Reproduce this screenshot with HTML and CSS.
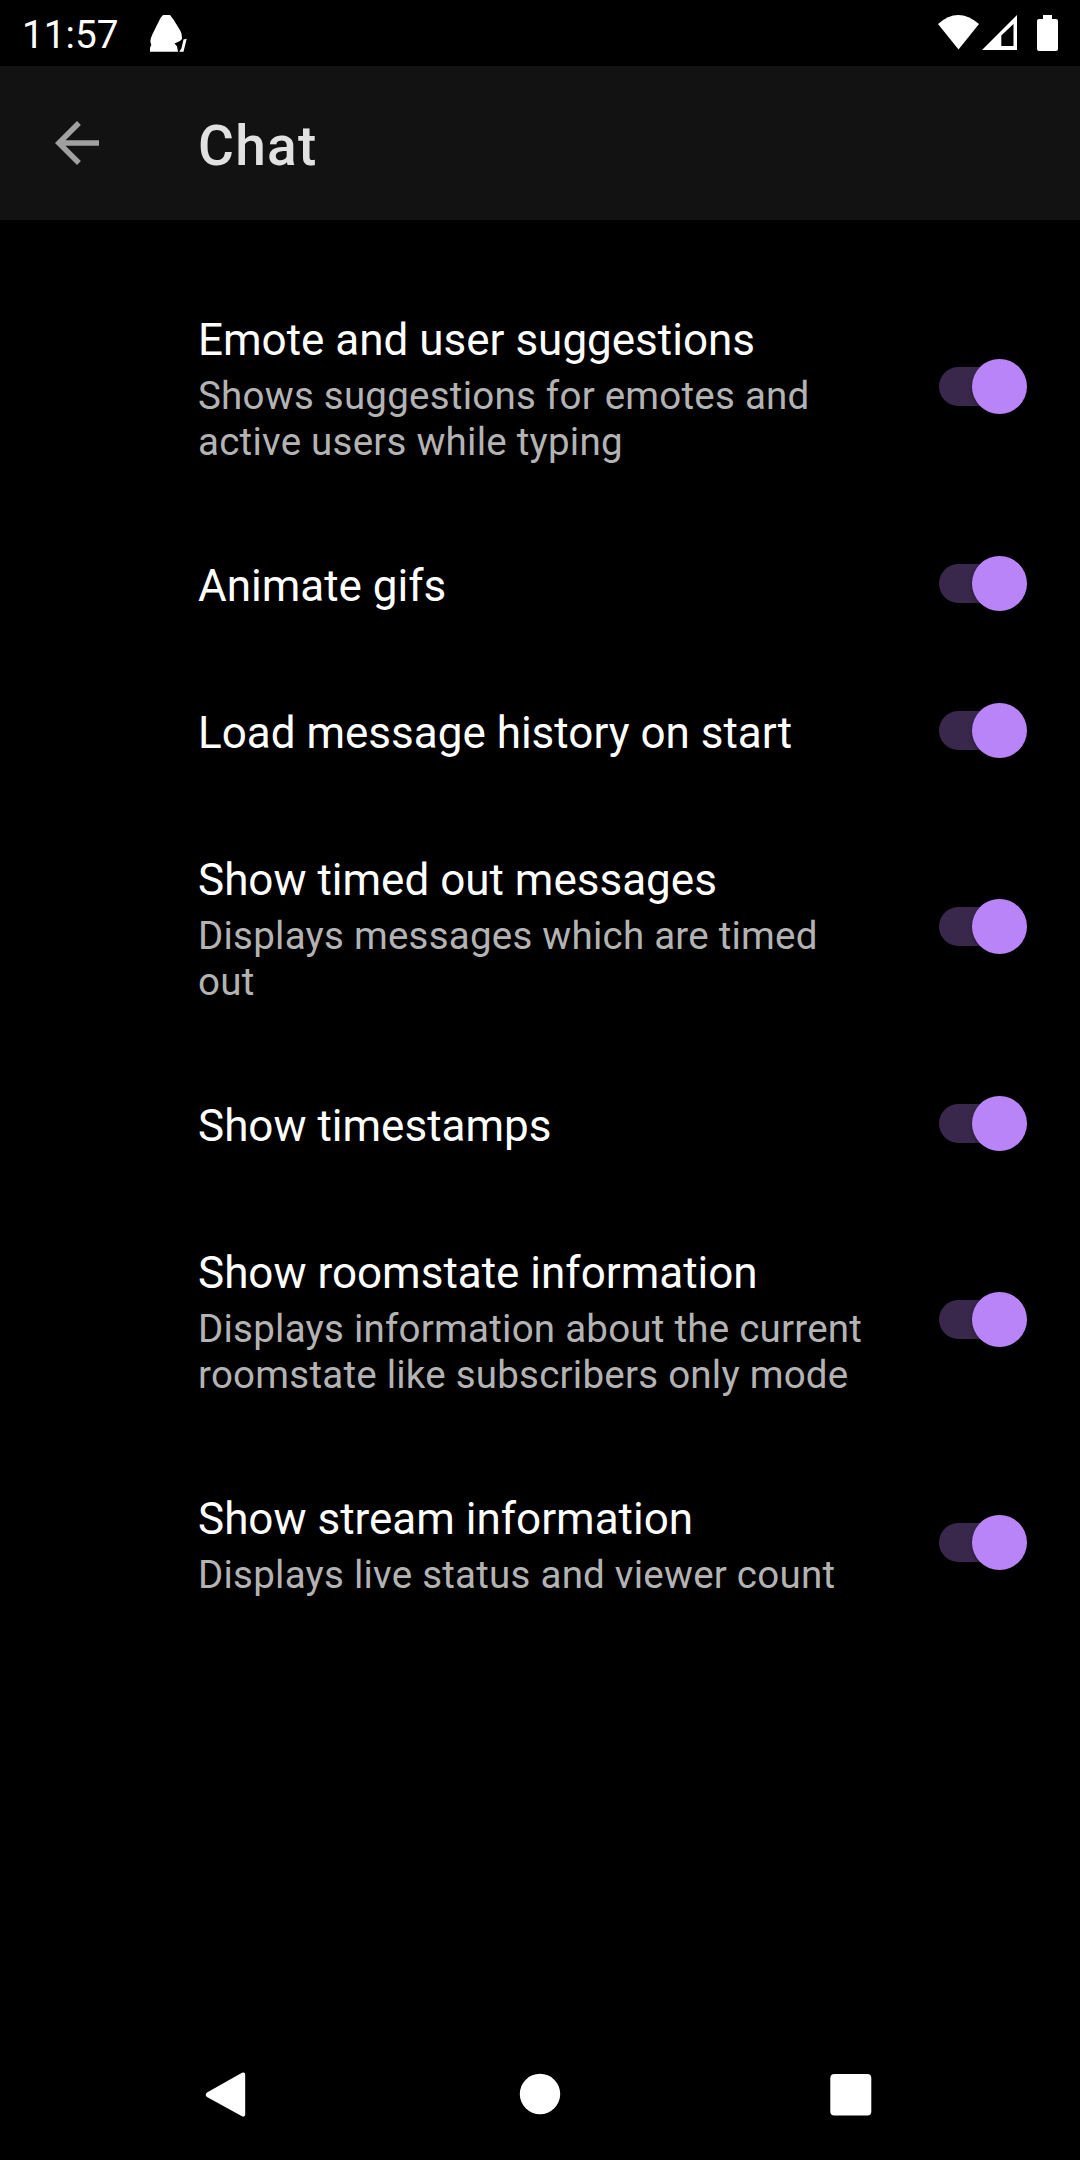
FILE: index.html
```html
<!DOCTYPE html>
<html lang="en">
<head>
<meta charset="utf-8">
<title>Chat</title>
<link rel="stylesheet" href="styles.css">
</head>
<body>
<div class="screen">
  <div class="status-bar">
    <span class="clock">11:57</span>
    <svg class="notification" width="40" height="40" viewBox="0 0 40 40"><path d="M14 2h7l3.800 5 6.400 10.500q1.800 3 1.600 5.500l.2 3-2 2-5.500 2.500 2.500 2.800 1 5.400H1v-4l1.300-2.700-1-3.500q.4-4 2-7l4.200-8.500L11.500 5z M34.500 26.500l3.200-.8-3.200 13h-4.300l2.300-3.500z"/></svg>
    <svg class="signals" width="120" height="40" viewBox="0 0 120 40"><path d="M0 11Q20-7 41 11L20.500 36.500z"/><path fill-rule="evenodd" d="M44 37L79 2v35zM63.300 22.500V33H75.500V11z"/><path d="M105 2h9v4h4q2 0 2 2v28q0 2-2 2h-17q-2 0-2-2V8q0-2 2-2h4z"/></svg>
  </div>
  <header class="app-bar">
    <svg class="back" width="66" height="66" viewBox="0 0 24 24"><path d="M20 11H7.830l5.590-5.590L12 4l-8 8 8 8 1.410-1.410L7.830 13H20z"/></svg>
    <h1 class="heading">Chat</h1>
  </header>
  <main class="settings">
    <div class="row"><div class="text"><div class="title">Emote and user suggestions</div><div class="summary">Shows suggestions for emotes and active users while typing</div></div><div class="switch"><div class="thumb"></div></div></div>
    <div class="row"><div class="text"><div class="title">Animate gifs</div></div><div class="switch"><div class="thumb"></div></div></div>
    <div class="row"><div class="text"><div class="title">Load message history on start</div></div><div class="switch"><div class="thumb"></div></div></div>
    <div class="row"><div class="text"><div class="title">Show timed out messages</div><div class="summary">Displays messages which are timed out</div></div><div class="switch"><div class="thumb"></div></div></div>
    <div class="row"><div class="text"><div class="title">Show timestamps</div></div><div class="switch"><div class="thumb"></div></div></div>
    <div class="row"><div class="text"><div class="title">Show roomstate information</div><div class="summary">Displays information about the current roomstate like subscribers only mode</div></div><div class="switch"><div class="thumb"></div></div></div>
    <div class="row"><div class="text"><div class="title">Show stream information</div><div class="summary">Displays live status and viewer count</div></div><div class="switch"><div class="thumb"></div></div></div>
  </main>
  <nav class="nav-bar">
    <svg width="48" height="48" viewBox="0 0 48 48"><path d="M5 22.500L40 2.800Q43 1.500 43.200 4.500v40q-.2 3-3.200 1.800L5 27q-2.500-2 0-4.500z"/></svg>
    <svg width="48" height="48" viewBox="0 0 48 48"><circle cx="24" cy="24" r="20.200"/></svg>
    <svg width="48" height="48" viewBox="0 0 48 48"><rect x=".3" y="4" width="41" height="41.500" rx="4"/></svg>
  </nav>
</div>
</body>
</html>
```
FILE: styles.css
```css
body { margin: 0; background: #000; font-family: Roboto, sans-serif; }
svg { display: block; fill: #fff; }
.screen { width: 1080px; height: 2160px; display: flex; flex-direction: column; overflow: hidden; }
.status-bar { height: 66px; box-sizing: border-box; padding: 0 22px; display: flex; align-items: flex-start; color: #fff; }
.clock { width: 127px; font-size: 38.8px; line-height: 70px; white-space: nowrap; }
.notification { margin-top: 13px; }
.signals { margin: 13px 0 0 auto; }
.app-bar { height: 154px; background: #121212; display: flex; align-items: center; padding-left: 44px; }
.back { fill: #a0a0a0; }
.heading { margin: 0 0 0 88px; padding-top: 6px; font-size: 55px; font-weight: 500; line-height: 64px; letter-spacing: 1.3px; color: #e1e1e1; }
.settings { flex: 1; padding-top: 44px; }
.row { display: flex; align-items: center; justify-content: space-between; padding: 44px 53px 44px 198px; }
.text { width: 676px; }
.title { padding: 6px 0 1px; font-size: 44px; line-height: 52px; color: #fff; white-space: nowrap; }
.summary { padding: 6px 0 1px; font-size: 38.5px; line-height: 46px; letter-spacing: 0.235px; color: #b3b3b3; }
.switch { position: relative; width: 88px; height: 55px; margin-bottom: 1px; display: flex; align-items: center; justify-content: flex-end; }
.switch::before { content: ""; position: absolute; left: 0; top: 8px; width: 72px; height: 39px; border-radius: 20px; background: #3a284c; }
.thumb { position: relative; width: 55px; height: 55px; border-radius: 50%; background: #b984f8; box-shadow: 0 2px 4px rgba(0, 0, 0, 0.35); }
.nav-bar { height: 132px; display: flex; align-items: center; justify-content: space-between; padding: 0 202px; }
```
